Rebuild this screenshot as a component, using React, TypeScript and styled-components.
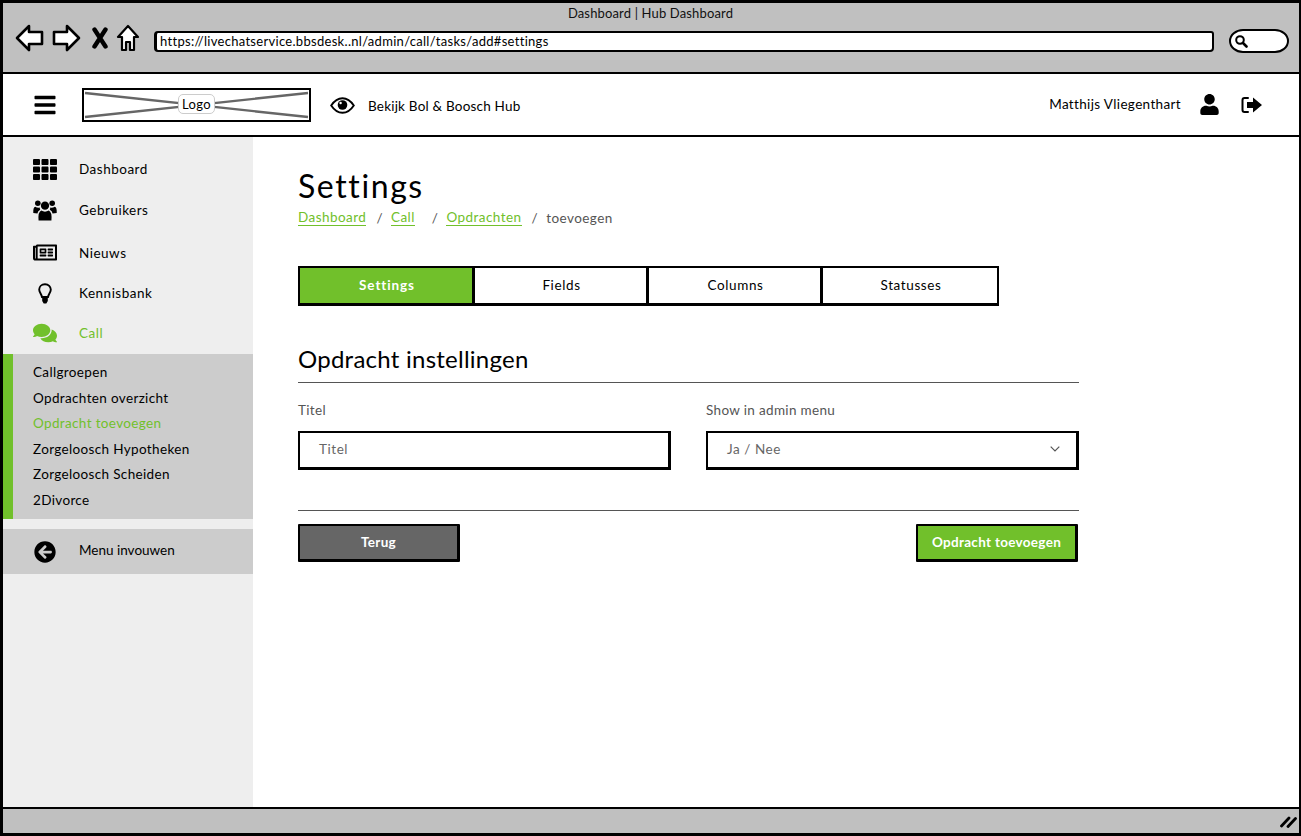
import React from "react";
import styled, { createGlobalStyle } from "styled-components";
import {
  FaTh, FaRegNewspaper, FaComments, FaArrowCircleLeft, FaUser, FaBars,
} from "react-icons/fa";

const GREEN = "#71c02b";
const FONT = `"Lato", "Open Sans", sans-serif`;

const Global = createGlobalStyle`
  html, body { margin: 0; padding: 0; background: #fff; }
  body { font-family: ${FONT}; color: #000; }
  * { box-sizing: border-box; }
`;

const Frame = styled.div`
  width: 1301px;
  height: 836px;
  border: 3px solid #000;
  border-right-width: 2px;
  display: flex;
  flex-direction: column;
  overflow: hidden;
`;

const Chrome = styled.div`
  height: 71px;
  flex: none;
  background: #c0c0c0;
  border-bottom: 2px solid #000;
  padding-top: 2px;
  display: flex;
  flex-direction: column;
`;

const ChromeTitle = styled.div`
  text-align: center;
  font-size: 13px;
  line-height: 16px;
  letter-spacing: 0.15px;
  color: #111;
  margin-left: -1px;
`;

const ChromeRow = styled.div`
  display: flex;
  align-items: center;
  margin-top: 0;
  padding-left: 12px;
  height: 34px;
`;

const NavIcon = styled.svg<{ $gap: number }>`
  flex: none;
  display: block;
  margin-right: ${(p) => p.$gap}px;
`;

const UrlBox = styled.div`
  width: 1060px;
  height: 21px;
  margin-left: 1px;
  margin-top: 7px;
  background: #fff;
  border: 2px solid #000;
  border-left-width: 3px;
  border-radius: 4px 3px 4px 4px;
  font-size: 13px;
  line-height: 17px;
  letter-spacing: 0.3px;
  padding-left: 3px;
  white-space: nowrap;
`;

const SearchBox = styled.div`
  width: 60px;
  height: 24px;
  margin-left: 15px;
  margin-top: 5px;
  background: #fff;
  border: 2px solid #000;
  border-radius: 14px / 12px;
  display: flex;
  align-items: center;
  padding-left: 3px;
`;

const Header = styled.header`
  height: 63px;
  flex: none;
  background: #fff;
  border-bottom: 2px solid #000;
  display: flex;
  align-items: center;
  padding: 0 36px 0 31px;
`;

const Burger = styled(FaBars)`
  width: 22px;
  height: 24px;
  flex: none;
`;

const LogoBox = styled.div`
  position: relative;
  width: 229px;
  height: 34px;
  margin-left: 26px;
  border: 2px solid #000;
  flex: none;
  display: flex;
  align-items: center;
  justify-content: center;
`;

const LogoCross = styled.svg`
  position: absolute;
  inset: 0;
  width: 100%;
  height: 100%;
`;

const LogoTag = styled.span`
  position: relative;
  background: #fff;
  border: 1px solid #ccc;
  border-radius: 5px;
  font-size: 13px;
  line-height: 18px;
  padding: 0 3px;
  letter-spacing: 0.3px;
  margin-top: -2px;
`;

const HubName = styled.span`
  margin-left: 13px;
  margin-top: 2px;
  font-size: 13.5px;
  letter-spacing: 0.2px;
`;

const Spacer = styled.div`
  flex: 1;
`;

const UserName = styled.span`
  font-size: 13.5px;
  letter-spacing: 0.35px;
  margin-top: -1px;
`;

const UserIcon = styled(FaUser)`
  width: 21px;
  height: 21px;
  margin-left: 18px;
`;

const Body = styled.div`
  flex: 1;
  display: flex;
  min-height: 0;
`;

const Sidebar = styled.aside`
  width: 250px;
  flex: none;
  background: #eee;
  padding-top: 12px;
`;

const NavItem = styled.div<{ $h: number; $active?: boolean }>`
  height: ${(p) => p.$h}px;
  display: flex;
  align-items: center;
  padding-left: 30px;
  font-size: 13.5px;
  letter-spacing: 0.5px;
  color: ${(p) => (p.$active ? GREEN : "#000")};
`;

const NavGlyph = styled.span`
  width: 24px;
  height: 24px;
  margin-right: 22px;
  display: flex;
  align-items: center;
  justify-content: center;
  flex: none;
  font-size: 24px;
`;

const SubMenu = styled.div`
  height: 165px;
  background: #ccc;
  border-left: 10px solid ${GREEN};
  padding: 6px 0 0 20px;
`;

const SubItem = styled.div<{ $active?: boolean }>`
  height: 25.6px;
  line-height: 25px;
  font-size: 13.5px;
  letter-spacing: 0.35px;
  color: ${(p) => (p.$active ? GREEN : "#000")};
`;

const Collapse = styled.div`
  height: 45px;
  margin-top: 10px;
  padding: 0 0 0 30px;
  background: #ccc;
  display: flex;
  align-items: center;
  font-size: 13.5px;
  letter-spacing: 0;
`;

const CollapseLabel = styled.span`
  margin-top: -4px;
`;

const Main = styled.main`
  flex: 1;
  background: #fff;
  padding: 29px 0 0 45px;
`;

const PageTitle = styled.h1`
  margin: 0;
  font-size: 32px;
  line-height: 40px;
  font-weight: 400;
  letter-spacing: 1.6px;
`;

const Crumbs = styled.div`
  display: flex;
  margin-top: 2px;
  height: 20px;
  align-items: center;
  font-size: 13.5px;
  letter-spacing: 0.45px;
  color: #555;
`;

const CrumbLink = styled.span`
  color: ${GREEN};
  border-bottom: 1px solid ${GREEN};
  line-height: 15px;
`;

const CrumbSep = styled.span<{ $l: number; $r: number }>`
  margin: 0 ${(p) => p.$r}px 0 ${(p) => p.$l}px;
`;

const Tabs = styled.div`
  display: flex;
  margin-top: 38px;
`;

const Tab = styled.div<{ $w: number; $active?: boolean }>`
  width: ${(p) => p.$w}px;
  height: 40px;
  margin-right: -1px;
  border: 2px solid #000;
  border-bottom-width: 3px;
  padding: 0 0 2px 2px;
  display: flex;
  align-items: center;
  justify-content: center;
  font-size: 13.5px;
  letter-spacing: ${(p) => (p.$active ? 0.9 : 0.6)}px;
  font-weight: ${(p) => (p.$active ? 700 : 400)};
  background: ${(p) => (p.$active ? GREEN : "#fff")};
  color: ${(p) => (p.$active ? "#fff" : "#000")};
`;

const Form = styled.div`
  width: 781px;
`;

const SectionTitle = styled.h2`
  margin: 37px 0 0;
  font-size: 24px;
  line-height: 32px;
  font-weight: 400;
  letter-spacing: 0.25px;
`;

const Rule = styled.hr<{ $gap: number }>`
  margin: ${(p) => p.$gap}px 0 0;
  border: 0;
  height: 1px;
  background: #555;
`;

const Fields = styled.div`
  display: grid;
  grid-template-columns: 373px 373px;
  column-gap: 35px;
  margin-top: 18px;
`;

const Field = styled.div`
  display: flex;
  flex-direction: column;
`;

const Label = styled.label`
  font-size: 13.5px;
  line-height: 18px;
  letter-spacing: 0.33px;
  color: #555;
`;

const Control = styled.div`
  margin-top: 12px;
  height: 39px;
  border: 2px solid #000;
  border-bottom-width: 3px;
  border-right-width: 3px;
  display: flex;
  align-items: center;
  justify-content: space-between;
  padding: 0 16px 3px 19px;
  font-size: 13.5px;
  letter-spacing: 0.55px;
  color: #666;
`;

const Actions = styled.div`
  display: flex;
  justify-content: space-between;
  margin-top: 13px;
  padding-right: 1px;
`;

const Button = styled.button<{ $primary?: boolean }>`
  width: 162px;
  height: 38px;
  border: 2px solid #000;
  border-bottom-width: 3px;
  border-right-width: 3px;
  border-radius: 1px;
  padding: 0 0 2px;
  font-family: ${FONT};
  font-size: 13.5px;
  font-weight: 700;
  letter-spacing: 0.3px;
  color: #fff;
  background: ${(p) => (p.$primary ? GREEN : "#666")};
`;

const Footer = styled.footer`
  height: 26px;
  flex: none;
  background: #c0c0c0;
  border-top: 2px solid #000;
  display: flex;
  align-items: center;
  justify-content: flex-end;
  padding-right: 2px;
`;

const Arrow = ({ flip }: { flip?: boolean }) => (
  <NavIcon $gap={flip ? 11 : 8} width="29" height="28" viewBox="0 0 29 28">
    <path
      d={flip ? "M2 8 L15 8 L15 2 L27 14 L15 26 L15 20 L2 20 Z" : "M27 8 L14 8 L14 2 L2 14 L14 26 L14 20 L27 20 Z"}
      fill="#fff"
      stroke="#000"
      strokeWidth="2.6"
      strokeLinejoin="round"
    />
  </NavIcon>
);

const CloseMark = () => (
  <NavIcon $gap={8} width="16" height="22" viewBox="0 0 16 22">
    <path d="M2.5 2.5 L13.5 19.5 M13.5 2.5 L2.5 19.5" stroke="#000" strokeWidth="4.4" strokeLinecap="round" />
  </NavIcon>
);

const Home = () => (
  <NavIcon $gap={13} width="24" height="28" viewBox="0 0 24 28">
    <path
      d="M12 2 L22 13 L18 13 L18 26 L14 26 L14 18 L10 18 L10 26 L6 26 L6 13 L2 13 Z"
      fill="#fff"
      stroke="#000"
      strokeWidth="2.2"
      strokeLinejoin="round"
    />
  </NavIcon>
);

const EyeMark = () => (
  <svg width="25" height="17" viewBox="0 0 25 17" style={{ marginLeft: 19, flex: "none", marginTop: 2 }}>
    <path
      d="M1.2 8.5 C4.5 3.5 8 1.2 12.5 1.2 C17 1.2 20.5 3.5 23.8 8.5 C20.5 13.5 17 15.8 12.5 15.8 C8 15.8 4.5 13.5 1.2 8.5 Z"
      fill="#fff"
      stroke="#000"
      strokeWidth="1.9"
    />
    <circle cx="12.5" cy="8" r="4.8" fill="#000" />
    <circle cx="10.6" cy="6" r="1.2" fill="#fff" />
  </svg>
);

const UsersMark = () => (
  <svg width="25" height="23" viewBox="0 0 25 23">
    <circle cx="12.5" cy="6.5" r="4.3" fill="#000" />
    <path d="M5.8 22 Q5 13 8.6 11.6 Q12.5 14 16.4 11.6 Q20 13 19.2 22 Z" fill="#000" />
    <circle cx="5" cy="4" r="2.9" fill="#000" />
    <circle cx="20" cy="4" r="2.9" fill="#000" />
    <path d="M0.3 14 Q0 8 2.4 7.6 Q4.5 9 7.2 8.4 Q6.8 9.5 7.5 10.8 Q5 12 4.6 14.5 Z" fill="#000" />
    <path d="M24.7 14 Q25 8 22.6 7.6 Q20.5 9 17.8 8.4 Q18.2 9.5 17.5 10.8 Q20 12 20.4 14.5 Z" fill="#000" />
  </svg>
);

const Bulb = () => (
  <svg width="14" height="21" viewBox="0 0 14 21">
    <path
      d="M7 1.2 C3.5 1.2 1.2 3.7 1.2 6.6 C1.2 9.4 3.4 10.6 4 14 L10 14 C10.6 10.6 12.8 9.4 12.8 6.6 C12.8 3.7 10.5 1.2 7 1.2 Z"
      fill="none"
      stroke="#000"
      strokeWidth="1.9"
    />
    <path d="M4.2 14.5 H9.8 V18 L8.3 20.5 H5.7 L4.2 18 Z" fill="#000" />
  </svg>
);

const Magnifier = () => (
  <svg width="14" height="14" viewBox="0 0 14 14">
    <circle cx="6" cy="6" r="3.8" fill="none" stroke="#000" strokeWidth="2" />
    <path d="M9 9 L12.5 12.5" stroke="#000" strokeWidth="2.6" strokeLinecap="round" />
  </svg>
);

const Logout = () => (
  <svg width="22" height="18" viewBox="0 0 22 18" style={{ marginLeft: 21 }}>
    <path d="M7 2 H3.5 Q1.5 2 1.5 4 V14 Q1.5 16 3.5 16 H7" fill="none" stroke="#000" strokeWidth="2" strokeLinecap="round" />
    <path d="M6 6 H12 V1.5 L21 9 L12 16.5 V12 H6 Z" fill="#000" />
  </svg>
);

const Chevron = () => (
  <svg width="10" height="6" viewBox="0 0 10 6">
    <path d="M0.7 0.7 L5 5 L9.3 0.7" fill="none" stroke="#555" strokeWidth="1.2" />
  </svg>
);

const Grip = () => (
  <svg width="17" height="13" viewBox="0 0 17 13">
    <path d="M1.5 11 L9 3 M8 11.5 L15.5 3.5" stroke="#000" strokeWidth="2.8" strokeLinecap="round" />
  </svg>
);

const App: React.FC = () => (
  <>
    <Global />
    <Frame>
      <Chrome>
        <ChromeTitle>Dashboard | Hub Dashboard</ChromeTitle>
        <ChromeRow>
          <Arrow />
          <Arrow flip />
          <CloseMark />
          <Home />
          <UrlBox>https://livechatservice.bbsdesk..nl/admin/call/tasks/add#settings</UrlBox>
          <SearchBox>
            <Magnifier />
          </SearchBox>
        </ChromeRow>
      </Chrome>
      <Header>
        <Burger />
        <LogoBox>
          <LogoCross viewBox="0 0 225 30" preserveAspectRatio="none">
            <path d="M1 3 L224 27 M1 27 L224 3" stroke="#666" strokeWidth="2.4" />
          </LogoCross>
          <LogoTag>Logo</LogoTag>
        </LogoBox>
        <EyeMark />
        <HubName>Bekijk Bol &amp; Boosch Hub</HubName>
        <Spacer />
        <UserName>Matthijs Vliegenthart</UserName>
        <UserIcon />
        <Logout />
      </Header>
      <Body>
        <Sidebar>
          <NavItem $h={40}>
            <NavGlyph><FaTh size={25} /></NavGlyph>Dashboard
          </NavItem>
          <NavItem $h={42}>
            <NavGlyph><UsersMark /></NavGlyph>Gebruikers
          </NavItem>
          <NavItem $h={43}>
            <NavGlyph><FaRegNewspaper size={25} /></NavGlyph>Nieuws
          </NavItem>
          <NavItem $h={38}>
            <NavGlyph><Bulb /></NavGlyph>Kennisbank
          </NavItem>
          <NavItem $h={42} $active>
            <NavGlyph><FaComments size={26} /></NavGlyph>Call
          </NavItem>
          <SubMenu>
            <SubItem>Callgroepen</SubItem>
            <SubItem>Opdrachten overzicht</SubItem>
            <SubItem $active>Opdracht toevoegen</SubItem>
            <SubItem>Zorgeloosch Hypotheken</SubItem>
            <SubItem>Zorgeloosch Scheiden</SubItem>
            <SubItem>2Divorce</SubItem>
          </SubMenu>
          <Collapse>
            <NavGlyph><FaArrowCircleLeft size={22} /></NavGlyph>
            <CollapseLabel>Menu invouwen</CollapseLabel>
          </Collapse>
        </Sidebar>
        <Main>
          <PageTitle>Settings</PageTitle>
          <Crumbs>
            <CrumbLink>Dashboard</CrumbLink>
            <CrumbSep $l={10} $r={8}>/</CrumbSep>
            <CrumbLink>Call</CrumbLink>
            <CrumbSep $l={17} $r={8}>/</CrumbSep>
            <CrumbLink>Opdrachten</CrumbLink>
            <CrumbSep $l={10} $r={8}>/</CrumbSep>
            <span>toevoegen</span>
          </Crumbs>
          <Tabs>
            <Tab $w={176} $active>Settings</Tab>
            <Tab $w={175}>Fields</Tab>
            <Tab $w={175}>Columns</Tab>
            <Tab $w={178}>Statusses</Tab>
          </Tabs>
          <Form>
            <SectionTitle>Opdracht instellingen</SectionTitle>
            <Rule $gap={7} />
            <Fields>
              <Field>
                <Label>Titel</Label>
                <Control>Titel</Control>
              </Field>
              <Field>
                <Label>Show in admin menu</Label>
                <Control>
                  Ja / Nee
                  <Chevron />
                </Control>
              </Field>
            </Fields>
            <Rule $gap={40} />
            <Actions>
              <Button>Terug</Button>
              <Button $primary>Opdracht toevoegen</Button>
            </Actions>
          </Form>
        </Main>
      </Body>
      <Footer>
        <Grip />
      </Footer>
    </Frame>
  </>
);

export default App;
